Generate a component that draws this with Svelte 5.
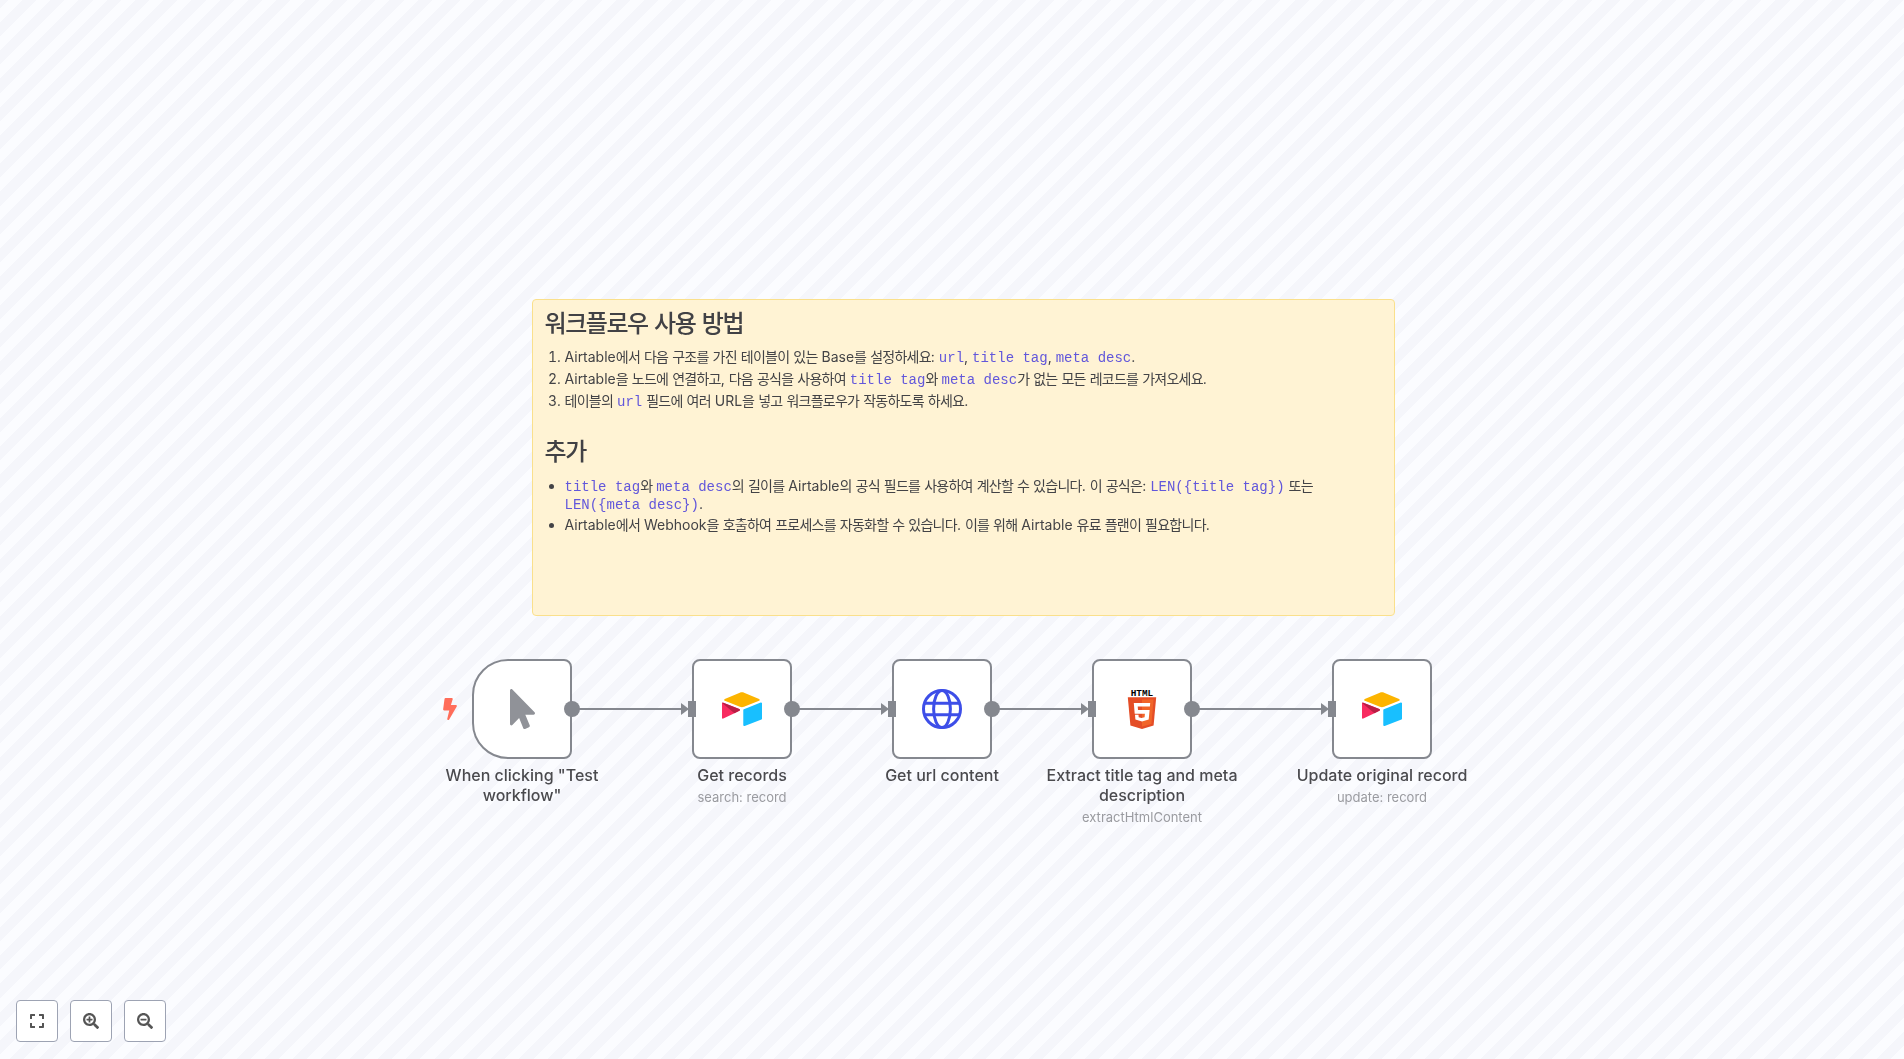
<script>
  const search = "M505 476.7L476.7 505c-9.4 9.4-24.6 9.4-33.9 0L343 405.3c-4.5-4.5-7-10.6-7-17V372c-35.3 27.6-79.7 44-128 44C93.1 416 0 322.9 0 208S93.1 0 208 0s208 93.1 208 208c0 48.3-16.4 92.7-44 128h16.3c6.4 0 12.5 2.5 17 7l99.7 99.7c9.3 9.4 9.3 24.6 0 34zM344 208c0-75.2-60.8-136-136-136S72 132.8 72 208s60.8 136 136 136 136-60.8 136-136z";
  const plus = "M304 192v32c0 6.6-5.4 12-12 12h-56v56c0 6.6-5.4 12-12 12h-32c-6.6 0-12-5.4-12-12v-56h-56c-6.6 0-12-5.4-12-12v-32c0-6.6 5.4-12 12-12h56v-56c0-6.6 5.4-12 12-12h32c6.6 0 12 5.4 12 12v56h56c6.6 0 12 5.4 12 12z";
  const minus = "M304 192v32c0 6.6-5.4 12-12 12H124c-6.6 0-12-5.4-12-12v-32c0-6.6 5.4-12 12-12h168c6.6 0 12 5.4 12 12z";
  const nodes = [
    { x: 472, kind: 'trigger', label: 'When clicking "Test workflow"', sub: '' },
    { x: 692, kind: 'airtable', label: 'Get records', sub: 'search: record' },
    { x: 892, kind: 'globe', label: 'Get url content', sub: '' },
    { x: 1092, kind: 'html', label: 'Extract title tag and meta description', sub: 'extractHtmlContent' },
    { x: 1332, kind: 'airtable', label: 'Update original record', sub: 'update: record' }
  ];
  const edges = [[572, 681], [792, 881], [992, 1081], [1192, 1321]];
  const steps = [
    'Airtable에서 다음 구조를 가진 테이블이 있는 Base를 설정하세요: `url`, `title tag`, `meta desc`.',
    'Airtable을 노드에 연결하고, 다음 공식을 사용하여 `title tag`와 `meta desc`가 없는 모든 레코드를 가져오세요.',
    '테이블의 `url` 필드에 여러 URL을 넣고 워크플로우가 작동하도록 하세요.'
  ];
  const extras = [
    '`title tag`와 `meta desc`의 길이를 Airtable의 공식 필드를 사용하여 계산할 수 있습니다. 이 공식은: `LEN({title tag})` 또는 `LEN({meta desc})`.',
    'Airtable에서 Webhook을 호출하여 프로세스를 자동화할 수 있습니다. 이를 위해 Airtable 유료 플랜이 필요합니다.'
  ];
  const hangul = (s) => s.split(/([\uac00-\ud7a3]+)/);
  const isKo = (s) => /^[\uac00-\ud7a3]/.test(s);
</script>

{#snippet ko(s)}{#each hangul(s) as p}{#if isKo(p)}<span class="ko">{p}</span>{:else}{p}{/if}{/each}{/snippet}
{#snippet rich(s)}{#each s.split('`') as p, i}{#if i % 2}<code>{p}</code>{:else}{@render ko(p)}{/if}{/each}{/snippet}

<main class="canvas">
  <section class="sticky">
    <h2>{@render ko('워크플로우 사용 방법')}</h2>
    <ol>
      {#each steps as s}<li>{@render rich(s)}</li>{/each}
    </ol>
    <h2 class="second">{@render ko('추가')}</h2>
    <ul>
      {#each extras as s}<li>{@render rich(s)}</li>{/each}
    </ul>
  </section>

  <svg class="bolt" viewBox="0 0 320 512" aria-hidden="true">
    <path fill="#ff6d5a" d="M296 160H180.6l42.6-129.8C227.2 15 215.7 0 200 0H56C44 0 33.8 8.9 32.2 20.8l-32 240C-1.7 275.2 9.5 288 24 288h118.7L96.6 482.5c-3.6 15.2 8 29.5 23.3 29.5 8.4 0 16.4-4.4 20.8-12l176-304c9.3-15.9-2.2-36-20.7-36z" />
  </svg>

  {#each nodes as n}
    <div class="node" style="left: {n.x}px">
      <div class="box" class:trigger={n.kind === 'trigger'}>
        {#if n.kind === 'trigger'}
          <svg width="25" height="40" viewBox="0 0 320 512" aria-hidden="true">
            <path fill="#909298" d="M302.189 329.126H196.105l55.831 135.993c3.889 9.428-.555 19.999-9.444 23.999l-49.165 21.427c-9.165 4-19.443-.571-23.332-9.714l-53.053-129.136-86.664 89.138C18.729 472.71 0 463.554 0 447.977V18.299C0 1.899 19.921-6.096 30.277 5.443l284.412 292.542c11.472 11.179 3.007 31.141-12.5 31.141z" />
          </svg>
        {:else if n.kind === 'airtable'}
          <svg width="40" height="34" viewBox="0 0 200 170" aria-hidden="true">
            <path fill="#fcb400" d="M89 3.8 13.9 34.9c-4.2 1.7-4.1 7.7.1 9.4l75.4 29.9c6.6 2.6 14 2.6 20.6 0l75.4-29.9c4.2-1.7 4.3-7.7.1-9.4L110.5 3.8c-6.9-2.9-14.6-2.9-21.5 0z" />
            <path fill="#18bfff" d="M106.4 90.4v74.7c0 3.6 3.6 6 6.9 4.7l84-32.6c1.9-.8 3.2-2.6 3.2-4.7V57.8c0-3.6-3.6-6-6.9-4.7l-84 32.6c-1.9.8-3.2 2.6-3.2 4.7z" />
            <path fill="#f82b60" d="M86.8 94.3 61.9 106.3l-2.5 1.2L6.7 132.7c-3.3 1.6-7.6-.8-7.6-4.5V58.1c0-1.3.7-2.5 1.6-3.4.4-.4.8-.7 1.2-.9 1.2-.7 3-.9 4.5-.3l79.9 31.7c4.1 1.6 4.4 7.3.5 9.1z" />
            <path fill="#ba1e45" d="M86.8 94.3 61.9 106.3 0.9 54.6c.4-.4.8-.7 1.2-.9 1.2-.7 3-.9 4.5-.3l79.9 31.7c4.1 1.6 4.4 7.3.3 9.2z" />
          </svg>
        {:else if n.kind === 'globe'}
          <svg width="40" height="40" viewBox="0 0 40 40" fill="none" stroke="#3d4ee8" stroke-width="3" aria-hidden="true">
            <circle cx="20" cy="20" r="18.5" />
            <ellipse cx="20" cy="20" rx="8.4" ry="18.5" />
            <path d="M3 14.3h34M3 25.7h34" />
          </svg>
        {:else}
          <svg width="40" height="40" viewBox="0 0 40 40" aria-hidden="true">
            <text x="20" y="6.8" text-anchor="middle" class="htmltxt">HTML</text>
            <path fill="#e44d26" d="M5.8 8.3h28.4l-2.6 28.2L20 39.9 8.4 36.5z" />
            <path fill="#f16529" d="M20 10.6v27l9.4-2.6 2.2-24.4z" />
            <path fill="#fff" d="M11.8 14h16.4l-.3 3.5H15.7l.3 3.6h11.6l-.9 9.5L20 32.6l-6.6-2-.4-4.8h3.5l.2 2.4 2.8.8 3.1-.8.3-3.5H12.7z" />
          </svg>
        {/if}
      </div>
      <div class="caption">
        <div class="label">{n.label}</div>
        {#if n.sub}<div class="sub">{n.sub}</div>{/if}
      </div>
    </div>
  {/each}

  <svg class="edges" width="1904" height="1059" viewBox="0 0 1904 1059" aria-hidden="true">
    {#each edges as [a, b]}
      <line x1={a} y1="709" x2={b} y2="709" stroke="#85888f" stroke-width="2" />
      <path d="M{b} 703 L{b + 8} 709 L{b} 715 Z" fill="#85888f" />
      <rect x={b + 7} y="701" width="8" height="16" fill="#85888f" />
      <circle cx={a} cy="709" r="8" fill="#85888f" />
    {/each}
  </svg>

  <div class="controls">
    <button aria-label="Fit view">
      <svg width="14" height="16" viewBox="0 0 448 512" aria-hidden="true"><path fill="#555" d="M0 180V56c0-13.3 10.7-24 24-24h124c6.6 0 12 5.4 12 12v40c0 6.6-5.4 12-12 12H64v84c0 6.6-5.4 12-12 12H12c-6.6 0-12-5.4-12-12zM288 44v40c0 6.6 5.4 12 12 12h84v84c0 6.6 5.4 12 12 12h40c6.6 0 12-5.4 12-12V56c0-13.3-10.7-24-24-24H300c-6.6 0-12 5.4-12 12zm148 276h-40c-6.6 0-12 5.4-12 12v84h-84c-6.6 0-12 5.4-12 12v40c0 6.6 5.4 12 12 12h124c13.3 0 24-10.7 24-24V332c0-6.6-5.4-12-12-12zM160 468v-40c0-6.6-5.4-12-12-12H64v-84c0-6.6-5.4-12-12-12H12c-6.6 0-12 5.4-12 12v124c0 13.3 10.7 24 24 24h124c6.6 0 12-5.4 12-12z" /></svg>
    </button>
    <button aria-label="Zoom in">
      <svg width="16" height="16" viewBox="0 0 512 512" aria-hidden="true"><path fill="#555" d={plus} /><path fill="#555" d={search} /></svg>
    </button>
    <button aria-label="Zoom out">
      <svg width="16" height="16" viewBox="0 0 512 512" aria-hidden="true"><path fill="#555" d={minus} /><path fill="#555" d={search} /></svg>
    </button>
  </div>
</main>

<style>
  :global(body) {
    margin: 0;
    font-family: Inter, "Noto Sans CJK KR", sans-serif;
    overflow: hidden;
  }
  .canvas {
    position: relative;
    width: 1904px;
    height: 1059px;
    overflow: hidden;
    background: repeating-linear-gradient(-45deg, #fbfcff 0, #fbfcff 9.4px, #f5f6fb 9.4px, #f5f6fb 19.4px, #fbfcff 19.4px, #fbfcff 20px);
  }
  .sticky {
    position: absolute;
    left: 532px;
    top: 299px;
    width: 863px;
    height: 317px;
    box-sizing: border-box;
    padding: 8px 11.5px;
    background: #fff3d4;
    border: 1px solid #fae08c;
    border-radius: 4px;
    color: #434346;
    font-size: 14px;
    line-height: 18px;
    will-change: transform;
  }
  .ko {
    letter-spacing: -0.053em;
    line-height: 1;
  }
  h2 {
    margin: 0 0 9px;
    padding-top: 1px;
    font-size: 24px;
    line-height: 30px;
    font-weight: 500;
    color: #414145;
  }
  h2 .ko {
    letter-spacing: -0.06em;
  }
  h2.second {
    margin: 22px 0 10px;
  }
  ol, ul {
    margin: 0;
    padding-left: 20px;
  }
  li {
    padding-bottom: 4px;
  }
  ul li {
    padding-bottom: 3px;
  }
  code {
    font-family: "Liberation Mono", monospace;
    font-size: 14px;
    line-height: 1;
    color: #6257db;
  }
  .edges {
    position: absolute;
    left: 0;
    top: 0;
  }
  .bolt {
    position: absolute;
    left: 443px;
    top: 698px;
    width: 14px;
    height: 22px;
  }
  .node {
    position: absolute;
    top: 659px;
    width: 100px;
  }
  .box {
    position: relative;
    box-sizing: border-box;
    width: 100px;
    height: 100px;
    display: flex;
    align-items: center;
    justify-content: center;
    background: #fff;
    border: 2px solid #85888f;
    border-radius: 8px;
  }
  .box.trigger {
    border-radius: 36px 8px 8px 36px;
  }
  .caption {
    position: absolute;
    top: 106px;
    left: -50px;
    width: 200px;
    text-align: center;
    will-change: transform;
  }
  .label {
    font-size: 16px;
    line-height: 20px;
    font-weight: 500;
    color: #4a4a4e;
  }
  .sub {
    margin-top: 4px;
    font-size: 13px;
    line-height: 16px;
    color: #9a9ba0;
  }
  .htmltxt {
    font-family: "Liberation Mono", monospace;
    font-size: 9.4px;
    font-weight: 700;
    fill: #000;
  }
  .controls {
    position: absolute;
    left: 16px;
    top: 1000px;
    display: flex;
    gap: 12px;
  }
  button {
    box-sizing: border-box;
    width: 42px;
    height: 42px;
    display: flex;
    align-items: center;
    justify-content: center;
    padding: 0;
    background: #fff;
    border: 1px solid #9da3b3;
    border-radius: 4px;
  }
</style>
